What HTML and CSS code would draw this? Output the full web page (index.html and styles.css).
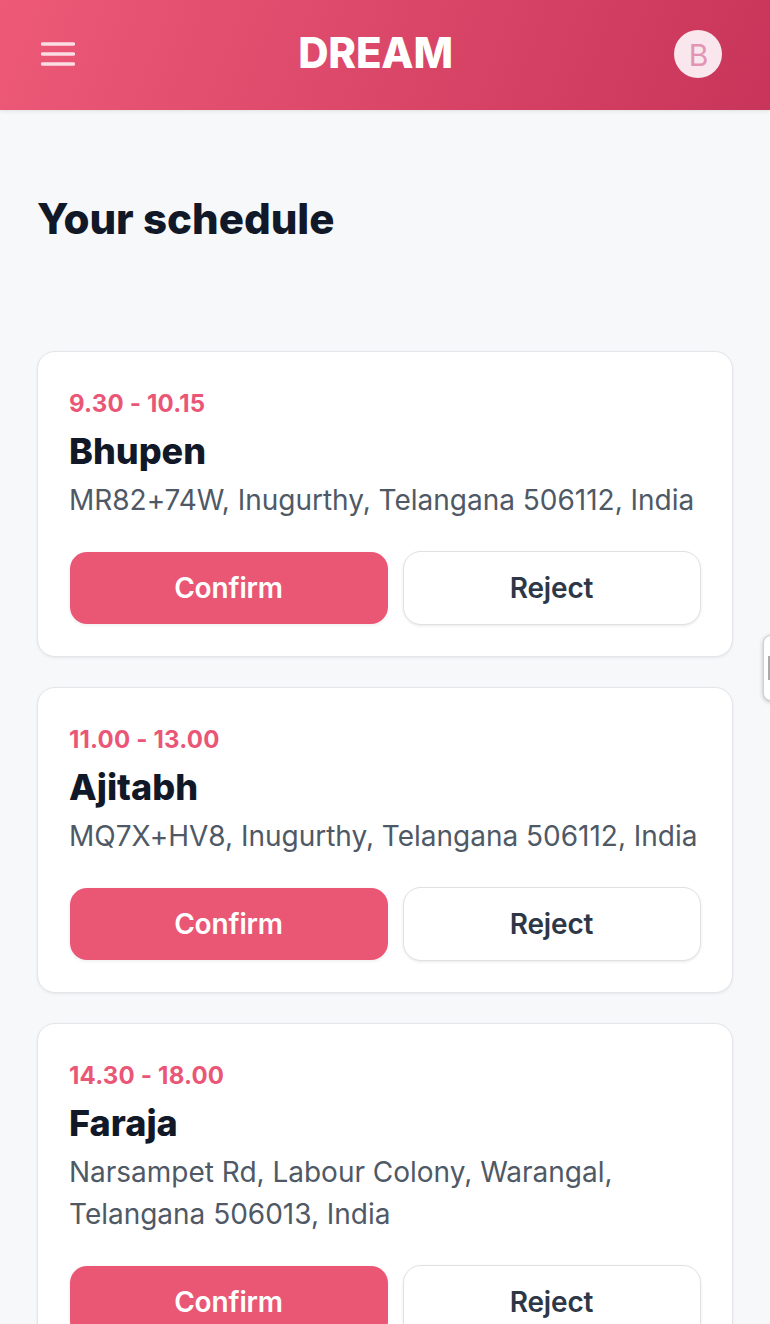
FILE: index.html
```html
<!DOCTYPE html>
<html lang="en">
<head>
<meta charset="utf-8">
<title>Your schedule</title>
<link rel="stylesheet" href="styles.css">
</head>
<body>
<header class="topbar">
  <svg class="menu" viewBox="0 0 34 24" aria-label="Menu"><path d="M1.5 2h31M1.5 12h31M1.5 22h31" stroke="currentColor" stroke-width="3.4" stroke-linecap="round"/></svg>
  <h1 class="brand">DREAM</h1>
  <div class="avatar">B</div>
</header>
<main class="content">
  <h2 class="title">Your schedule</h2>
  <div class="list">
    <article class="card">
      <p class="time">9.30 - 10.15</p>
      <h3 class="name">Bhupen</h3>
      <p class="address">MR82+74W, Inugurthy, Telangana 506112, India</p>
      <div class="actions"><button class="btn confirm">Confirm</button><button class="btn reject">Reject</button></div>
    </article>
    <article class="card">
      <p class="time">11.00 - 13.00</p>
      <h3 class="name">Ajitabh</h3>
      <p class="address">MQ7X+HV8, Inugurthy, Telangana 506112, India</p>
      <div class="actions"><button class="btn confirm">Confirm</button><button class="btn reject">Reject</button></div>
    </article>
    <article class="card">
      <p class="time">14.30 - 18.00</p>
      <h3 class="name">Faraja</h3>
      <p class="address">Narsampet Rd, Labour Colony, Warangal, Telangana 506013, India</p>
      <div class="actions"><button class="btn confirm">Confirm</button><button class="btn reject">Reject</button></div>
    </article>
  </div>
</main>
<div class="handle"></div>
</body>
</html>
```
FILE: styles.css
```css
* { box-sizing: border-box; margin: 0; padding: 0; }
body { height: 1324px; overflow: hidden; background: #f7f8fa; color: #111827; font-family: Inter, "Liberation Sans", sans-serif; }
.topbar { display: flex; align-items: center; justify-content: space-between; height: 110px; padding: 0 48px 3px 41px; background: linear-gradient(110deg, #ed5977, #c8355a); box-shadow: 0 1px 4px rgba(0,0,0,.1); color: #fff; }
.menu { width: 34px; height: 24px; color: #fbdee4; }
.brand { position: relative; top: -1px; left: 1px; font-size: 42px; line-height: 50px; font-weight: 800; letter-spacing: -0.2px; }
.avatar { width: 48px; height: 48px; padding-left: 1px; border-radius: 50%; background: #f9e7ed; color: #e294b3; font-size: 30px; line-height: 50px; text-align: center; }
.content { padding: 84px 37px 0; }
.title { font-size: 42px; line-height: 50px; font-weight: 800; }
.list { display: flex; flex-direction: column; gap: 30px; margin-top: 107px; }
.card { padding: 31px; border: 1px solid #e3e5e8; border-radius: 18px; background: #fff; box-shadow: 0 1px 3px rgba(0,0,0,.07); }
.time { margin-top: 5px; font-size: 24px; line-height: 32px; font-weight: 700; letter-spacing: 0.2px; color: #ea5676; }
.name { margin-top: 7px; font-size: 36px; line-height: 48px; font-weight: 800; }
.address { margin-top: 4px; font-size: 28px; line-height: 42px; color: #4f5966; letter-spacing: -0.01px; }
.actions { display: grid; grid-template-columns: 320px 298px; gap: 14px; margin-top: 30px; }
.btn { height: 74px; padding-right: 1px; border-radius: 18px; border: 1px solid transparent; font: 600 28px/36px Inter, sans-serif; letter-spacing: -0.15px; }
.confirm { background: #ea5775; background-clip: padding-box; color: #fff; box-shadow: 0 1px 3px rgba(0,0,0,.05); }
.reject { background: #fff; border-color: #dfe2e4; color: #2d3748; box-shadow: 0 1px 3px rgba(0,0,0,.09); }
.handle { position: absolute; left: 763px; top: 635px; width: 20px; height: 66px; border: 1px solid #d0d0d0; border-radius: 8px; background: #fff; box-shadow: 0 1px 4px rgba(0,0,0,.25); }
.handle::before { content: ""; position: absolute; left: 4px; top: 20px; width: 2px; height: 24px; background: #aaa; }
```
